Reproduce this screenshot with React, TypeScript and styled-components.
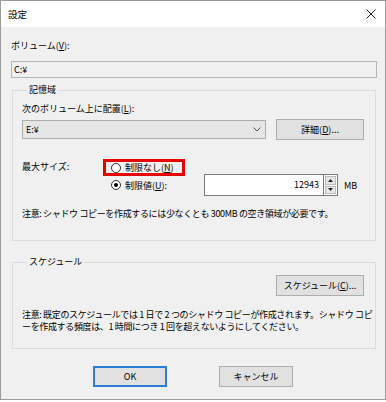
import React from "react";
import styled, { createGlobalStyle } from "styled-components";

const Global = createGlobalStyle`
  html, body { margin: 0; padding: 0; background: #ffffff; }
  body { font-family: "Noto Sans CJK JP", "Noto Sans", sans-serif; font-size: 9px; color: #000; }
  * { box-sizing: border-box; }
`;

const Window = styled.div`
  width: 386px;
  height: 400px;
  border: 1px solid #9b9b9b;
  display: flex;
  flex-direction: column;
  background: #f0f0f0;
`;

const TitleBar = styled.div`
  height: 26px;
  background: #ffffff;
  display: flex;
  align-items: center;
  justify-content: space-between;
  padding: 0 9px 0 7px;
  font-size: 9.5px;
`;

const Body = styled.div`
  flex: 1;
  display: flex;
  flex-direction: column;
  padding: 0 8px 0 10px;
`;

const Label = styled.div<{ $mt?: number }>`
  line-height: 12px;
  height: 12px;
  margin-top: ${(p) => p.$mt ?? 0}px;
  white-space: nowrap;
`;

const ReadOnlyBox = styled.div`
  margin-top: 9px;
  height: 17px;
  border: 1px solid #b4b4b4;
  background: #f0f0f0;
  line-height: 15px;
  padding-left: 2px;
`;

const Group = styled.fieldset<{ $mt: number; $pb: number }>`
  margin: ${(p) => p.$mt}px 1px 0 1px;
  padding: 7px 11px ${(p) => p.$pb}px 9px;
  border: 1px solid #dcdcdc;
  min-width: 0;
`;

const Legend = styled.legend`
  margin-left: 5px;
  padding: 0 2px;
  line-height: 12px;
  height: 12px;
  font-size: 9px;
`;

const Row = styled.div<{ $mt?: number; $justify?: string }>`
  display: flex;
  align-items: center;
  justify-content: ${(p) => p.$justify ?? "flex-start"};
  margin-top: ${(p) => p.$mt ?? 0}px;
`;

const Combo = styled.div`
  width: 244px;
  height: 19px;
  border: 1px solid #acacac;
  background: #e6e6e6;
  display: flex;
  align-items: center;
  justify-content: space-between;
  padding: 0 4px 0 3px;
`;

const Button = styled.button<{ $w: number; $default?: boolean }>`
  width: ${(p) => p.$w}px;
  height: 21px;
  border: ${(p) => (p.$default ? "2px solid #2a7fd4" : "1px solid #adadad")};
  background: #e1e1e1;
  font-family: inherit;
  font-size: 9px;
  color: #000;
  padding: 0;
  line-height: 1;
`;

const SizeGrid = styled.div`
  margin-top: 19px;
  display: grid;
  grid-template-columns: 81px 101px auto;
  grid-template-rows: 15px 22px;
  align-items: center;
`;

const Highlight = styled.div`
  align-self: start;
  height: 17px;
  width: 82px;
  border: 3px solid #e60000;
  display: flex;
  align-items: center;
  padding-left: 5px;
`;

const RadioLine = styled.div`
  display: flex;
  align-items: center;
  padding-left: 8px;
`;

const Circle = styled.span<{ $on?: boolean }>`
  width: 10px;
  height: 10px;
  border-radius: 50%;
  border: 1px solid #333;
  background: #fff;
  display: inline-flex;
  align-items: center;
  justify-content: center;
  margin-right: 4px;
  flex: none;
  &::after {
    content: "";
    width: 4px;
    height: 4px;
    border-radius: 50%;
    background: ${(p) => (p.$on ? "#000" : "transparent")};
  }
`;

const RadioText = styled.span`
  line-height: 11px;
  white-space: nowrap;
`;

const U = styled.span`
  text-decoration: underline;
`;

const SpinWrap = styled.div`
  display: flex;
  align-items: center;
  grid-row: 2;
  grid-column: 3;
`;

const NumberBox = styled.div`
  width: 119px;
  height: 22px;
  border: 1px solid #7a7a7a;
  border-right: none;
  background: #fff;
  text-align: right;
  line-height: 20px;
  padding-right: 4px;
`;

const Spin = styled.div`
  width: 15px;
  height: 22px;
  border: 1px solid #7a7a7a;
  background: #fff;
  display: flex;
  flex-direction: column;
  padding: 1px;
  gap: 1px;
`;

const SpinBtn = styled.div`
  flex: 1;
  background: #e6e6e6;
  border: 1px solid #bcbcbc;
  display: flex;
  align-items: center;
  justify-content: center;
`;

const Unit = styled.span`
  margin-left: 6px;
`;

const Note = styled.div<{ $mt: number }>`
  margin-top: ${(p) => p.$mt}px;
  line-height: 12px;
  white-space: nowrap;
  letter-spacing: -0.35px;
`;

const Footer = styled.div`
  margin-top: 17px;
  display: flex;
  justify-content: center;
  gap: 52px;
  padding-right: 2px;
`;

const Chevron = () => (
  <svg width="8" height="5" viewBox="0 0 8 5">
    <path d="M0.5 0.5 L4 4 L7.5 0.5" fill="none" stroke="#555" strokeWidth="1" />
  </svg>
);

const Tri = ({ up }: { up?: boolean }) => (
  <svg width="5" height="3" viewBox="0 0 5 3">
    <path d={up ? "M0 3 L2.5 0 L5 3 Z" : "M0 0 L2.5 3 L5 0 Z"} fill="#222" />
  </svg>
);

const Close = () => (
  <svg width="10" height="10" viewBox="0 0 10 10">
    <path d="M0.5 0.5 L9.5 9.5 M9.5 0.5 L0.5 9.5" stroke="#222" strokeWidth="1" />
  </svg>
);

export default function App() {
  return (
    <>
      <Global />
      <Window>
        <TitleBar>
          <span>設定</span>
          <Close />
        </TitleBar>
        <Body>
          <Label $mt={13}>
            ボリューム(<U>V</U>):
          </Label>
          <ReadOnlyBox>C:¥</ReadOnlyBox>

          <Group $mt={6} $pb={20}>
            <Legend>記憶域</Legend>
            <Label>
              次のボリューム上に配置(<U>L</U>):
            </Label>
            <Row $mt={4} $justify="space-between">
              <Combo>
                <span>E:¥</span>
                <Chevron />
              </Combo>
              <Button $w={88}>
                詳細(<U>D</U>)...
              </Button>
            </Row>
            <SizeGrid>
              <Label>最大サイズ:</Label>
              <Highlight>
                <Circle />
                <RadioText>
                  制限なし(<U>N</U>)
                </RadioText>
              </Highlight>
              <span />
              <span />
              <RadioLine>
                <Circle $on />
                <RadioText>
                  制限値(<U>U</U>):
                </RadioText>
              </RadioLine>
              <SpinWrap>
                <NumberBox>12943</NumberBox>
                <Spin>
                  <SpinBtn>
                    <Tri up />
                  </SpinBtn>
                  <SpinBtn>
                    <Tri />
                  </SpinBtn>
                </Spin>
                <Unit>MB</Unit>
              </SpinWrap>
            </SizeGrid>
            <Note $mt={12}>
              注意: シャドウ コピーを作成するには少なくとも 300MB の空き領域が必要です。
            </Note>
          </Group>

          <Group $mt={15} $pb={15}>
            <Legend>スケジュール</Legend>
            <Row $justify="flex-end">
              <Button $w={88}>
                スケジュール(<U>C</U>)...
              </Button>
            </Row>
            <Note $mt={13}>
              注意: 既定のスケジュールでは 1 日で 2 つのシャドウ コピーが作成されます。シャドウ コピ
            </Note>
            <Note $mt={0}>
              ーを作成する頻度は、1 時間につき 1 回を超えないようにしてください。
            </Note>
          </Group>

          <Footer>
            <Button $w={74} $default>
              OK
            </Button>
            <Button $w={74}>キャンセル</Button>
          </Footer>
        </Body>
      </Window>
    </>
  );
}
